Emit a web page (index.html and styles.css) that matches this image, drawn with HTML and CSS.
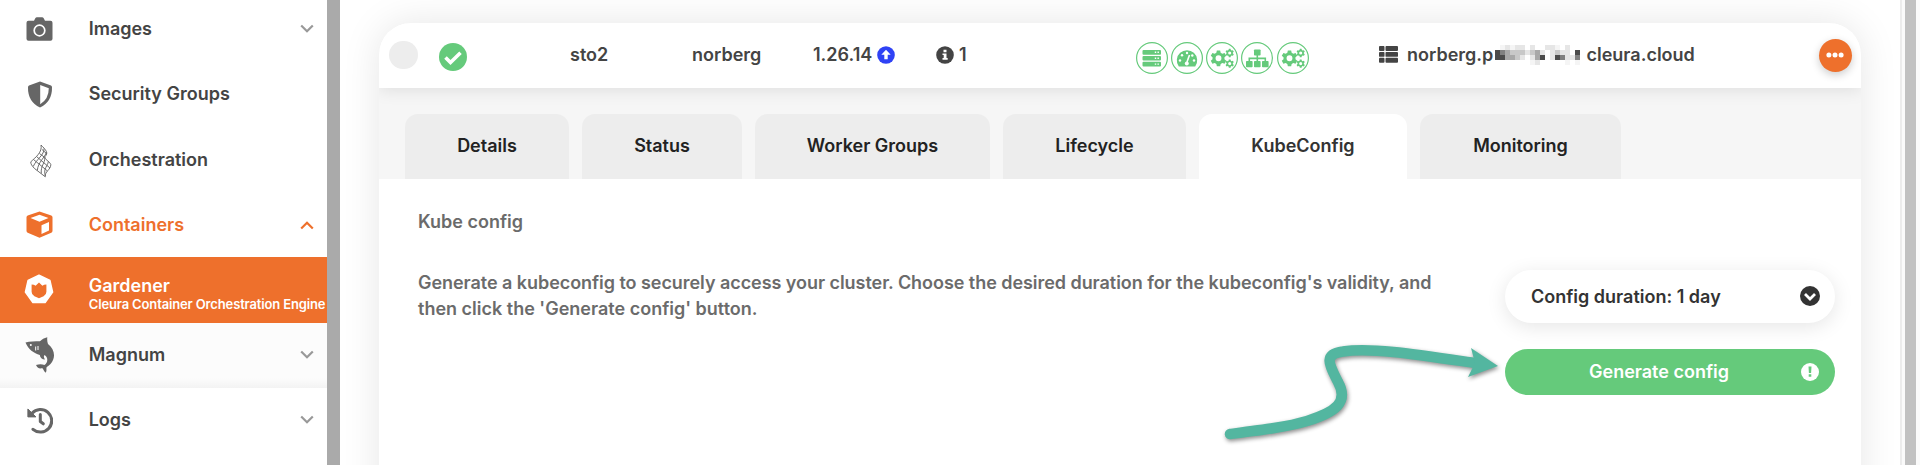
FILE: index.html
```html
<!DOCTYPE html>
<html lang="en">
<head>
<meta charset="utf-8">
<title>Cleura Cloud</title>
<link rel="stylesheet" href="styles.css">
</head>
<body>
<svg class="defs" width="0" height="0">
  <defs>
    <g id="gear">
      <path fill-rule="evenodd" d="M-1.700-8h3.400l.5 2.300 1.700 1 2.300-.8 1.700 3-1.800 1.500v2l1.800 1.500-1.700 3-2.300-.8-1.700 1-.5 2.300h-3.400l-.5-2.300-1.700-1-2.300.8-1.700-3 1.800-1.500v-2l-1.800-1.500 1.700-3 2.300.8 1.700-1zM0-3a3 3 0 1 0 0 6 3 3 0 0 0 0-6z"/>
    </g>
    <g id="cogs">
      <use href="#gear" transform="translate(12.500 16.300) scale(.98)"/>
      <use href="#gear" transform="translate(23.700 11) scale(.52)"/>
      <use href="#gear" transform="translate(23.700 21.600) scale(.52)"/>
    </g>
    <g id="chev"><path d="M1.200 1.500 7 7.300l5.800-5.800" fill="none" stroke="currentColor" stroke-width="2.200"/></g>
  </defs>
</svg>
<div class="app">
  <nav class="sidebar">
    <a class="item">
      <span class="ico"><svg width="27" height="25" viewBox="0 0 27 25"><path fill="#666" d="M2.500 3.800H8L9.300 1.200Q9.800.3 11 .3h5q1.200 0 1.700.9L19 3.800h5.500q2 0 2 2v16q0 2-2 2h-22q-2 0-2-2v-16q0-2 2-2z"/><circle cx="13.500" cy="13.500" r="5.300" fill="none" stroke="#fff" stroke-width="1.700"/></svg></span>
      <span class="label"><b>Images</b></span>
      <svg class="chev" width="14" height="10"><use href="#chev"/></svg>
    </a>
    <a class="item">
      <span class="ico"><svg width="26" height="27" viewBox="0 0 26 27"><path fill="#666" fill-rule="evenodd" d="M13 .4 24 4.600q1 .5 1 1.600Q25.300 20.500 13 26.600.7 20.500 1 6.200 1 5.100 2 4.600zM13.200 4v19.200Q21.800 18 21.800 7.200z"/></svg></span>
      <span class="label"><b>Security Groups</b></span>
    </a>
    <a class="item">
      <span class="ico mesh"><svg width="22" height="34" viewBox="0 0 22 34"><g fill="none" stroke="#666" stroke-width=".95" stroke-linejoin="round"><path d="M11 1C12.500 8 6 13 .8 17.800c-.3 2 1.200 4 3.700 6.700l10.800 8.300c-.8-5.500 5.700-7 5.500-12.300C19.500 17 14 15.500 15 12.500 19 9 15.500 5.500 11 1z"/><path d="M14 4.500C14.500 11 6.500 15 3.200 22.500M16.500 8C15 13.500 8 18 7.300 26.500M14.800 14C15 19 10.500 22 11.300 29.500M18.300 17.500C18 22 13 24 15.300 32M12 5.500 17 10M9.500 9.500l6 4.500M6.500 12.500 20 24M3.500 15.500 17.500 27"/></g></svg></span>
      <span class="label"><b>Orchestration</b></span>
    </a>
    <a class="item open">
      <span class="ico"><svg width="27" height="27" viewBox="0 0 27 27"><path fill="#ee702c" fill-rule="evenodd" d="M13.500.4 25.300 4.400q1.200.5 1.200 1.800v13.600q0 1.300-1.200 1.900L13.500 26.800 1.700 21.700Q.5 21.100.5 19.800V6.200q0-1.300 1.200-1.800zM4.500 7l9 3.800 9-3.800-9-3.300zM15.500 14.300V23L23 19.600V11z"/></svg></span>
      <span class="label"><b>Containers</b></span>
      <svg class="chev up" width="14" height="10"><use href="#chev"/></svg>
    </a>
    <a class="item active">
      <span class="ico garden"><svg width="30" height="30" viewBox="0 0 30 30"><path fill="#fff" stroke="#fff" stroke-width="1.500" stroke-linejoin="round" d="M15 1.200 25.900 6.400 28.600 18.100 21.100 28.500H8.900L1.400 18.100 4.100 6.400z"/><path fill="#ee702c" d="M7.600 10.500q2.500.1 4 1.300L15 8.400l3.400 3.400q1.500-1.200 4-1.300v7.200q0 3-2.800 4.600L15 24.300l-4.600-2Q7.600 20.700 7.600 17.700z"/></svg></span>
      <span class="label"><b>Gardener</b><small>Cleura Container Orchestration Engine</small></span>
    </a>
    <a class="item sub">
      <span class="ico"><svg width="30" height="36" viewBox="0 0 30 36"><path fill="#666" d="M.5 5.500C5 4 10 4.500 15 4.200 17 2.500 19 1 22.300.3 22 3 22.300 5 23 7c7 5.500 8 14 2.500 20-2 2-3.500 2.500-4 3.500-.3 2 .5 3.500-1 5.300-1.200-1-1.800-3-3-4.500-2.500 0-4.500 1-6.500-3.300 3-1 6-1 8.500 0 2.300-2 3.300-4 2.500-7-1-2-2-3-3-2.500-.3 1.500 0 2.500 1 4-3 0-5-2-5.200-4.500C9 16.500 3 12 .5 5.500z"/><circle cx="5.800" cy="8" r="1" fill="#fff"/><path stroke="#fff" d="M10.700 9.500v4M13 9v4"/></svg></span>
      <span class="label"><b>Magnum</b></span>
      <svg class="chev" width="14" height="10"><use href="#chev"/></svg>
    </a>
    <a class="item">
      <span class="ico"><svg width="26" height="27" viewBox="0 0 26 27"><path d="M5 6.200A11.300 11.300 0 1 1 6 22.300" fill="none" stroke="#666" stroke-width="3.100" stroke-linecap="round"/><path fill="#666" stroke="#666" stroke-linejoin="round" d="M.9 2v7.900h8z"/><path d="M13.300 7.500v7l3 2.300" fill="none" stroke="#666" stroke-width="3" stroke-linecap="round" stroke-linejoin="round"/></svg></span>
      <span class="label"><b>Logs</b></span>
      <svg class="chev" width="14" height="10"><use href="#chev"/></svg>
    </a>
  </nav>
  <div class="divider"></div>
  <main class="main">
    <section class="card">
      <header class="head">
        <span class="dot"></span>
        <svg class="ok" width="28" height="28" viewBox="0 0 28 28"><circle cx="14" cy="14" r="14" fill="#65ca7b"/><path d="m6.500 14.500 5 5L21.500 9.700" fill="none" stroke="#fff" stroke-width="3.600"/></svg>
        <span class="cell"><b>sto2</b></span>
        <span class="cell"><b>norberg</b></span>
        <span class="cell ver"><b>1.26.14</b><svg width="18" height="18" viewBox="0 0 18 18"><circle cx="9" cy="9" r="8.800" fill="#2f42f5"/><path fill="#fff" d="m9 3.800 4.700 4.900h-3v4.600H7.300V8.700h-3z"/></svg></span>
        <span class="cell info"><svg width="18" height="18" viewBox="0 0 18 18"><circle cx="9" cy="9" r="8.800" fill="#444"/><path fill="#fff" d="M7.500 3.700h3v2.600h-3zM6.500 7.400h4v4.700h1.200v1.600H6.500v-1.600h1.200V9H6.500z"/></svg><b>1</b></span>
        <span class="badges">
          <svg viewBox="0 0 32 32"><circle cx="16" cy="16" r="15.400"/><g class="f"><rect x="6.500" y="8" width="18.500" height="4.700" rx="1"/><rect x="6.500" y="13.900" width="18.500" height="4.700" rx="1"/><rect x="6.500" y="19.800" width="18.500" height="4.700" rx="1"/></g><path stroke="#fff" stroke-width="1.400" stroke-dasharray="1.400 1.300" d="M18.800 10.300h4.200M18.800 16.200h4.200M18.800 22.100h4.200"/></svg>
          <svg viewBox="0 0 32 32"><circle cx="16" cy="16" r="15.400"/><path class="f" d="M7.800 24.500a10.200 10.200 0 1 1 16.400 0z"/><g class="holes"><circle cx="16" cy="11" r="1.200"/><circle cx="11" cy="13.200" r="1.200"/><circle cx="9" cy="18.500" r="1.200"/><circle cx="23" cy="18.500" r="1.200"/><circle cx="21.300" cy="13.500" r="1.200"/><circle cx="15.800" cy="21.500" r="2"/></g><path stroke="#fff" stroke-width="1.600" d="m16 20 2.500-7"/></svg>
          <svg viewBox="0 0 32 32"><circle cx="16" cy="16" r="15.400"/><use class="f" href="#cogs"/></svg>
          <svg viewBox="0 0 32 32"><circle cx="16" cy="16" r="15.400"/><g class="f"><rect x="13" y="7.500" width="6.600" height="6" rx=".8"/><rect x="5" y="19" width="6.600" height="6.300" rx=".8"/><rect x="13" y="19" width="6.600" height="6.300" rx=".8"/><rect x="21" y="19" width="6.600" height="6.300" rx=".8"/></g><path stroke-width="1.600" d="M16.300 13v6M8.300 19v-2.600h16V19"/></svg>
          <svg viewBox="0 0 32 32"><circle cx="16" cy="16" r="15.400"/><use class="f" href="#cogs"/></svg>
        </span>
        <span class="cell host">
          <svg width="19" height="17" viewBox="0 0 19 17"><g fill="#444"><rect y="0" width="5.500" height="4.900" rx=".9"/><rect x="6.500" width="12.500" height="4.900" rx=".9"/><rect y="5.900" width="5.500" height="4.900" rx=".9"/><rect x="6.500" y="5.900" width="12.500" height="4.900" rx=".9"/><rect y="11.800" width="5.500" height="4.900" rx=".9"/><rect x="6.500" y="11.800" width="12.500" height="4.900" rx=".9"/></g></svg>
          <b class="np">norberg.p</b>
          <svg class="mosaic" width="90" height="20" viewBox="0 0 18 4" shape-rendering="crispEdges"><path fill="#f5f5f5" d="M1 0h1v1h-1zM3 0h1v1h-1zM12 0h1v1h-1zM7 3h1v1h-1zM14 3h1v1h-1zM16 3h1v1h-1z"/><path fill="#e6e6e6" d="M2 0h1v1h-1zM4 0h2v1h-2zM7 0h1v1h-1zM10 0h2v1h-2zM14 0h1v1h-1zM6 1h1v1h-1zM9 1h1v1h-1zM11 1h1v2h-1zM13 1h2v1h-2zM5 2h1v1h-1zM7 2h1v1h-1zM14 2h2v1h-2zM8 3h1v1h-1z"/><path fill="#c8c8c8" d="M3 1h3v1h-3zM7 1h1v1h-1zM12 1h1v1h-1zM4 2h1v1h-1z"/><path fill="#a8a8a8" d="M2 1h1v2h-1zM3 2h1v1h-1zM8 1h1v1h-1zM8 2h1v1h-1z"/><path fill="#808080" d="M1 1h1v1h-1zM13 2h1v1h-1zM16 2h1v1h-1z"/><path fill="#4b4b4b" d="M0 1h1v2h-1zM1 2h1v1h-1zM9 2h1v1h-1zM12 2h1v1h-1zM16 1h1v1h-1z"/></svg>
          <b>cleura.cloud</b>
        </span>
        <button class="more"><svg width="18" height="6"><g fill="#fff"><circle cx="2.900" cy="3" r="2.500"/><circle cx="9" cy="3" r="2.500"/><circle cx="15.100" cy="3" r="2.500"/></g></svg></button>
      </header>
      <div class="tabs">
        <span class="tab w1">Details</span>
        <span class="tab w2">Status</span>
        <span class="tab w3">Worker Groups</span>
        <span class="tab w4">Lifecycle</span>
        <span class="tab w5 on">KubeConfig</span>
        <span class="tab w6">Monitoring</span>
      </div>
      <div class="body">
        <div class="copy">
          <h2>Kube config</h2>
          <p><span class="tight">Generate a kubeconfig to securely access your cluster. Choose the desired duration for the kubeconfig's validity, and</span><br>then click the 'Generate config' button.</p>
        </div>
        <div class="actions">
          <div class="select"><span>Config duration: 1 day</span><svg width="20" height="20" viewBox="0 0 20 20"><circle cx="10" cy="10" r="10" fill="#333"/><path d="m5 8 5 5 5-5" fill="none" stroke="#fff" stroke-width="2.800"/></svg></div>
          <button class="go"><span>Generate config</span><svg width="18" height="18" viewBox="0 0 18 18"><circle cx="9" cy="9" r="9" fill="#fff"/><path fill="#65ca7b" d="M7.500 3.500h3l-.4 6.500H7.900zM7.700 11.200h2.600v2.600H7.700z"/></svg></button>
        </div>
      </div>
    </section>
    <svg class="arrow" width="290" height="110" viewBox="1220 340 290 110"><g fill="#53b6a0"><path fill="none" stroke="#53b6a0" stroke-width="10.500" stroke-linecap="round" d="M1230 434C1262 430 1287 427 1307 421C1336 412 1349 402 1338 382C1330 366 1322 354 1343 351.500C1372 347 1420 355 1478 363.500"/><path d="M1498 366 1471 348 1475 363 1468 377z"/></g></svg>
  </main>
  <div class="scroll"><div class="thumb"></div></div>
</div>
</body>
</html>
```
FILE: styles.css
```css
* { box-sizing: border-box; }
body { margin: 0; background: #fff; font-family: Inter, "Liberation Sans", sans-serif; font-size: 18px; font-weight: 600; color: #444; overflow: hidden; }
b, h2, small { font-weight: inherit; }
svg { display: block; flex: none; }
button { border: 0; font: inherit; padding: 0; }
.defs { position: absolute; }
.app { display: flex; height: 465px; overflow: hidden; }

.sidebar { width: 327px; overflow: hidden; flex: none; }
.sidebar .item:first-child { margin-top: -3.400px; }
.item { display: flex; align-items: center; height: 65.200px; padding-right: 13px; }
.ico { width: 79px; display: flex; justify-content: center; margin-right: 9.700px; flex: none; }
.mesh { padding-left: 2px; padding-top: 3px; }
.garden { padding-right: 2px; padding-bottom: 2px; }
.label { flex: 1; white-space: nowrap; line-height: 22px; }
.chev { color: #999; }
.chev.up { transform: rotate(180deg); }
.open, .open .chev { color: #ee702c; }
.active { background: #ee702c; color: #fff; }
.active .label { padding-top: 10px; display: flex; flex-direction: column; line-height: 19px; }
.active small { font-size: 13px; line-height: 18px; letter-spacing: -.14px; }
.sub { background: linear-gradient(#fcfcfc 85%, #f3f3f3); }
.divider { width: 13px; background: #aaa; flex: none; }

.main { position: relative; flex: 1; padding: 22.700px 39px 0; background: #fff; overflow: hidden; }
.card { height: 500px; border-radius: 32px 32px 0 0; background: #fff; box-shadow: 0 0 38px rgba(0,0,0,.1); overflow: hidden; }
.head { position: relative; display: grid; align-items: center; height: 65.300px; background: #fff; box-shadow: 0 2px 16px rgba(0,0,0,.1);
  grid-template-columns: 49.500px 131.500px 122px 121px 123px 199.500px 243.500px 1fr auto; padding: 0 9.500px 0 10px; }
.dot { width: 28.600px; height: 28.600px; border-radius: 50%; background: #ededed; margin-top: -1px; }
.ok { margin-top: 3px; margin-left: .5px; }
.cell { display: flex; align-items: center; white-space: nowrap; margin-top: -1px; }
.ver { gap: 5px; }
.info { gap: 5px; }
.badges { display: flex; gap: 3.300px; margin-top: 6px; }
.badges svg { width: 32px; height: 32px; fill: none; stroke: #65ca7b; stroke-width: 1.200; }
.badges .f { fill: #65ca7b; stroke: none; }
.badges .holes { fill: #fff; stroke: none; }
.np { margin-left: 9px; width: 88px; }
.mosaic { margin-right: 1.500px; }
.more { width: 33px; height: 33px; border-radius: 50%; background: #ee702c; display: flex; align-items: center; justify-content: center; box-shadow: 0 3px 8px rgba(0,0,0,.2); }

.tabs { display: flex; gap: 13px; height: 91px; padding: 26px 26px 0; background: #f6f6f6; color: #222; }
.tab { height: 65px; display: flex; align-items: center; justify-content: center; padding-bottom: 1px; border-radius: 13px 13px 0 0; background: #ededed; white-space: nowrap; }
.tab.on { background: #fff; color: #333; }
.w1 { width: 164px; } .w2 { width: 160px; } .w3 { width: 235px; } .w4 { width: 183px; } .w5 { width: 208px; } .w6 { width: 201px; }

.body { display: flex; justify-content: space-between; padding: 30px 26px 0 39px; color: #6b6b6b; }
.copy { white-space: nowrap; }
h2 { margin: 0; font-size: 18px; line-height: 26px; }
p { margin: 35px 0 0; line-height: 26.200px; }
.tight { letter-spacing: -.05px; }
.actions { width: 330px; padding-top: 61px; flex: none; }
.select { display: flex; align-items: center; justify-content: space-between; height: 53px; border-radius: 26.500px; padding: 0 15px 0 26px; color: #333; background: #fff; box-shadow: 0 4px 20px rgba(0,0,0,.1); }
.go { display: flex; align-items: center; justify-content: flex-end; width: 330px; height: 46px; margin-top: 26px; padding-right: 16.500px; border-radius: 23px; background: #65ca7b; color: #fff; gap: 71.500px; }
.arrow { position: absolute; left: 880px; top: 340px; filter: drop-shadow(1px 2px 2px rgba(0,0,0,.45)); }

.scroll { width: 20px; border-left: 2px solid #ececec; background: #fafafa; padding-left: 3px; flex: none; }
.thumb { width: 11px; height: 465px; background: #c1c1c1; }
```
